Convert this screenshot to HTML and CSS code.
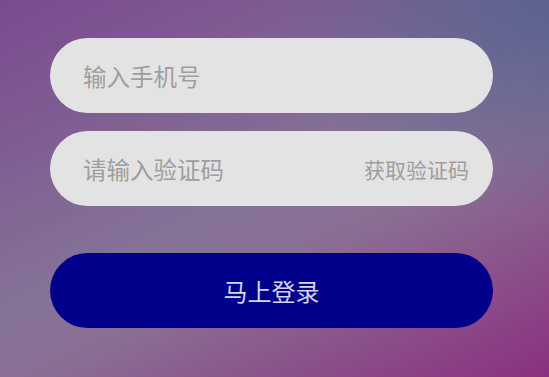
FILE: index.html
```html
<!DOCTYPE html>
<html lang="zh">
<head>
<meta charset="utf-8">
<link rel="stylesheet" href="styles.css">
</head>
<body>
<main class="login">
  <div class="field">
    <input class="field-input" type="tel" placeholder="输入手机号">
  </div>
  <div class="field">
    <input class="field-input" type="text" placeholder="请输入验证码">
    <span class="field-action">获取验证码</span>
  </div>
  <button class="submit" type="button">马上登录</button>
</main>
</body>
</html>
```
FILE: styles.css
```css
html, body {
  margin: 0;
  height: 100%;
}
body {
  font-family: "Noto Sans CJK SC", "Noto Sans", sans-serif;
  background:
    radial-gradient(ellipse 70% 80% at 100% 0%, rgba(88, 98, 144, 0.95) 0%, rgba(88, 98, 144, 0) 70%),
    linear-gradient(155deg, #7a4a90 0%, #857397 50%, #8a6f93 62%, #8a3080 100%);
  overflow: hidden;
}
.login {
  display: flex;
  flex-direction: column;
  width: 443px;
  padding: 38px 0 0 50px;
}
.field {
  display: flex;
  align-items: center;
  height: 75px;
  border-radius: 38px;
  background: #e3e3e3;
  padding: 0 24px 0 33px;
  box-sizing: border-box;
  margin-bottom: 18px;
}
.field-input {
  flex: 1;
  min-width: 0;
  border: 0;
  outline: 0;
  background: transparent;
  font-family: inherit;
  font-size: 23.5px;
  color: #555;
  padding: 0;
}
.field-input::placeholder {
  color: #9e9e9e;
}
.field-action {
  font-size: 21px;
  color: #9e9e9e;
}
.submit {
  margin-top: 29px;
  height: 75px;
  border: 0;
  border-radius: 38px;
  background: #00008b;
  color: #d4d4ec;
  font-family: inherit;
  font-size: 24px;
  cursor: pointer;
}
```
